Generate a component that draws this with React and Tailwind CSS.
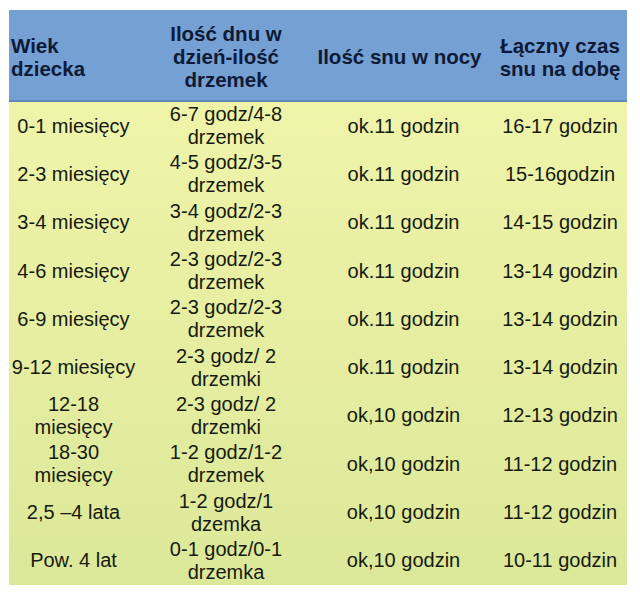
import React from "react";

const rows = [
  ["0-1 miesięcy", "6-7 godz/4-8\ndrzemek", "ok.11 godzin", "16-17 godzin"],
  ["2-3 miesięcy", "4-5 godz/3-5\ndrzemek", "ok.11 godzin", "15-16godzin"],
  ["3-4 miesięcy", "3-4 godz/2-3\ndrzemek", "ok.11 godzin", "14-15 godzin"],
  ["4-6 miesięcy", "2-3 godz/2-3\ndrzemek", "ok.11 godzin", "13-14 godzin"],
  ["6-9 miesięcy", "2-3 godz/2-3\ndrzemek", "ok.11 godzin", "13-14 godzin"],
  ["9-12 miesięcy", "2-3 godz/ 2\ndrzemki", "ok.11 godzin", "13-14 godzin"],
  ["12-18\nmiesięcy", "2-3 godz/ 2\ndrzemki", "ok,10 godzin", "12-13 godzin"],
  ["18-30\nmiesięcy", "1-2 godz/1-2\ndrzemek", "ok,10 godzin", "11-12 godzin"],
  ["2,5 –4 lata", "1-2 godz/1\ndzemka", "ok,10 godzin", "11-12 godzin"],
  ["Pow. 4 lat", "0-1 godz/0-1\ndrzemka", "ok,10 godzin", "10-11 godzin"],
];

const cols = "grid grid-cols-[129px_176px_179px_134px]";

export default function App() {
  return (
    <div className="w-[640px] h-[600px] bg-white pt-[10px] pl-[9px] font-['Liberation_Sans',Arial,sans-serif]">
      <div className="w-[618px]">
        {/* header */}
        <div className={`${cols} h-[92px] pt-[3px] bg-[#74a0d3] border-b-2 border-[#5f86ba] text-[#0e1a36] font-bold text-[20.5px] leading-[23px]`}>
          <div className="flex items-center pl-[2px]">
            Wiek<br />dziecka
          </div>
          <div className="flex items-center justify-center text-center">
            Ilość dnu w<br />dzień-ilość<br />drzemek
          </div>
          <div className="flex items-center justify-center text-center pr-[8px] whitespace-nowrap">
            Ilość snu w nocy
          </div>
          <div className="flex items-center justify-center text-center">
            Łączny czas<br />snu na dobę
          </div>
        </div>

        {/* body */}
        <div className="h-[483px] grid grid-rows-[repeat(10,1fr)] bg-gradient-to-b from-[#eff4a9] to-[#dce899] text-[#161a10] text-[20px] leading-[23px]">
          {rows.map((r, i) => (
            <div key={i} className={cols}>
              {r.map((cell, j) => (
                <div
                  key={j}
                  className="flex items-center justify-center text-center"
                >
                  <span className="whitespace-pre">{cell}</span>
                </div>
              ))}
            </div>
          ))}
        </div>
      </div>
    </div>
  );
}
